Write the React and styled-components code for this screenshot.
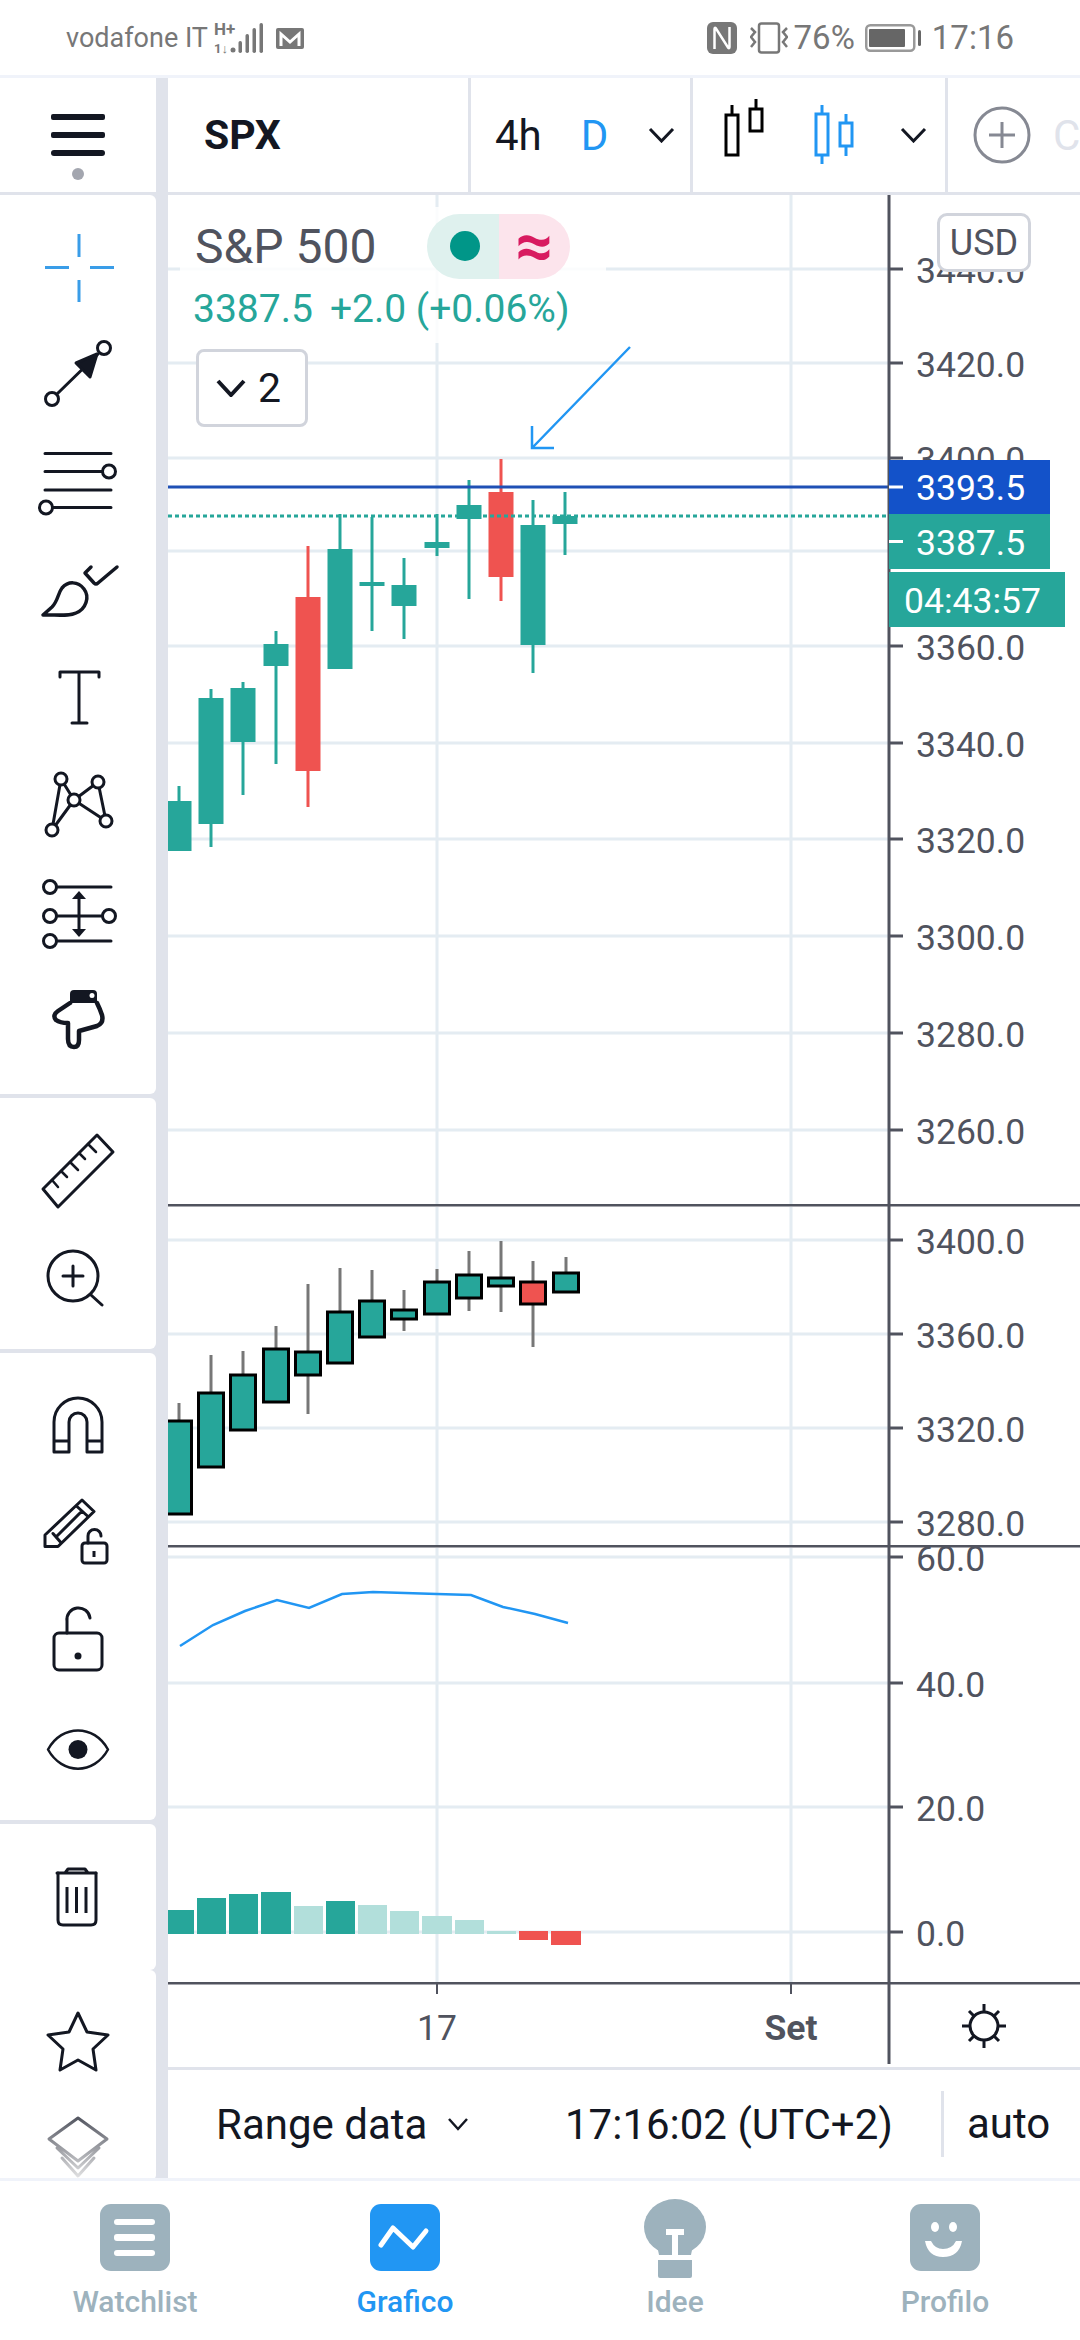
import React from 'react'
import styled, { createGlobalStyle } from 'styled-components'

const GlobalStyle = createGlobalStyle`
  html, body { margin: 0; padding: 0; background: #fff; }
  body { font-family: Roboto, "Liberation Sans", sans-serif; }
`

const UP = '#26a69a'
const DOWN = '#ef5350'
const GRID = '#e4ecf2'
const AXIS = '#50535e'
const INK = '#131722'
const BLUE = '#2196f3'
const STATUS = '#777'

// ---------- data (pixel coordinates on the chart canvas)
const gridX = [437, 791]

const mainTicks = [
  { y: 269, label: '3440.0' }, { y: 363, label: '3420.0' }, { y: 458, label: '3400.0' },
  { y: 551, label: '3380.0', hidden: true }, { y: 646, label: '3360.0' }, { y: 743, label: '3340.0' },
  { y: 839, label: '3320.0' }, { y: 936, label: '3300.0' }, { y: 1033, label: '3280.0' }, { y: 1130, label: '3260.0' },
]

const mainCandles = [
  { x: 179, w: 786, l: 848, t: 801, b: 851 },
  { x: 211, w: 689, l: 847, t: 698, b: 824 },
  { x: 243, w: 682, l: 795, t: 688, b: 742 },
  { x: 276, w: 631, l: 764, t: 644, b: 666 },
  { x: 308, w: 546, l: 807, t: 597, b: 771, red: true },
  { x: 340, w: 514, l: 669, t: 549, b: 669 },
  { x: 372, w: 517, l: 631, t: 582, b: 586 },
  { x: 404, w: 558, l: 639, t: 585, b: 606 },
  { x: 437, w: 514, l: 556, t: 542, b: 548 },
  { x: 469, w: 480, l: 599, t: 505, b: 519 },
  { x: 501, w: 459, l: 601, t: 492, b: 577, red: true },
  { x: 533, w: 500, l: 673, t: 525, b: 645 },
  { x: 565, w: 492, l: 555, t: 516, b: 524 },
]

const secondTicks = [
  { y: 1240, label: '3400.0' }, { y: 1334, label: '3360.0' }, { y: 1428, label: '3320.0' }, { y: 1522, label: '3280.0' },
]

const secondCandles = [
  { x: 179, w: 1403, l: 1515, t: 1421, b: 1514 },
  { x: 211, w: 1355, l: 1468, t: 1393, b: 1467 },
  { x: 243, w: 1351, l: 1431, t: 1375, b: 1430 },
  { x: 276, w: 1326, l: 1403, t: 1349, b: 1402 },
  { x: 308, w: 1284, l: 1414, t: 1352, b: 1375 },
  { x: 340, w: 1268, l: 1364, t: 1312, b: 1363 },
  { x: 372, w: 1270, l: 1338, t: 1301, b: 1337 },
  { x: 404, w: 1290, l: 1331, t: 1310, b: 1319 },
  { x: 437, w: 1269, l: 1315, t: 1282, b: 1314 },
  { x: 469, w: 1251, l: 1311, t: 1275, b: 1298 },
  { x: 501, w: 1241, l: 1312, t: 1278, b: 1286 },
  { x: 533, w: 1261, l: 1347, t: 1282, b: 1304, red: true },
  { x: 566, w: 1257, l: 1293, t: 1273, b: 1292 },
]

const thirdTicks = [
  { y: 1557, label: '60.0' }, { y: 1683, label: '40.0' }, { y: 1807, label: '20.0' }, { y: 1932, label: '0.0' },
]

const rsiLine = '180,1646 213,1625 245,1611 277,1600 309,1608 342,1594 373,1592 405,1593 437,1594 471,1595 503,1607 535,1614 568,1623'

const histogram = [
  { x: 168, w: 26, t: 1910, b: 1934, c: UP },
  { x: 197, w: 29, t: 1898, b: 1934, c: UP },
  { x: 229, w: 29, t: 1894, b: 1934, c: UP },
  { x: 261, w: 30, t: 1892, b: 1934, c: UP },
  { x: 294, w: 29, t: 1906, b: 1934, c: '#b2dfdb' },
  { x: 326, w: 29, t: 1901, b: 1934, c: UP },
  { x: 358, w: 29, t: 1905, b: 1934, c: '#b2dfdb' },
  { x: 390, w: 29, t: 1911, b: 1934, c: '#b2dfdb' },
  { x: 422, w: 30, t: 1916, b: 1934, c: '#b2dfdb' },
  { x: 455, w: 29, t: 1920, b: 1934, c: '#b2dfdb' },
  { x: 487, w: 29, t: 1931, b: 1934, c: '#b2dfdb' },
  { x: 519, w: 29, t: 1931, b: 1940, c: DOWN },
  { x: 551, w: 30, t: 1931, b: 1945, c: DOWN },
]

// ---------- page frame
const Page = styled.div`
  width: 1080px;
  height: 2340px;
  background: #fff;
  display: flex;
  flex-direction: column;
  overflow: hidden;
  color: ${INK};
`

const StatusBar = styled.div`
  height: 75px;
  flex: none;
  display: flex;
  align-items: center;
  justify-content: space-between;
  padding: 0 66px;
  border-bottom: 3px solid #f0f3fa;
  color: ${STATUS};
`

const StatusGroup = styled.div`
  display: flex;
  align-items: center;
`

const StatusText = styled.span`
  font-size: ${p => p.$size || 33}px;
  line-height: 40px;
  margin-left: ${p => p.$ml || 0}px;
  white-space: nowrap;
`

const StatusIcon = styled.svg`
  display: block;
  flex: none;
  margin-left: ${p => p.$ml || 0}px;
`

const Workspace = styled.div`
  flex: 1;
  min-height: 0;
  display: flex;
`

const Sidebar = styled.div`
  width: 156px;
  flex: none;
  display: flex;
  flex-direction: column;
  background: #e0e3eb;
`

const MenuCell = styled.div`
  height: 114px;
  flex: none;
  margin-bottom: 3px;
  background: #fff;
  display: flex;
  align-items: center;
  justify-content: center;
`

const ToolGroup = styled.div`
  background: #fff;
  padding: 19px 0 0;
  height: ${p => p.$h}px;
  flex: none;
  margin-bottom: ${p => p.$gap ?? 4}px;
  border-radius: 0 6px 6px 0;
  overflow: hidden;
  box-sizing: border-box;
`

const ToolIcon = styled.svg`
  display: block;
  width: 156px;
  height: 107px;
  fill: none;
  stroke: ${p => p.$stroke || INK};
  stroke-width: 3;
  stroke-linecap: round;
  stroke-linejoin: round;
`

const Gutter = styled.div`
  width: 12px;
  flex: none;
  background: #e0e3eb;
`

const Content = styled.div`
  flex: 1;
  min-width: 0;
  display: flex;
  flex-direction: column;
`

const Toolbar = styled.div`
  height: 114px;
  flex: none;
  display: flex;
  border-bottom: 3px solid #e0e3eb;
`

const ToolCell = styled.div`
  width: ${p => p.$w}px;
  flex: none;
  box-sizing: border-box;
  display: flex;
  align-items: center;
  padding-left: ${p => p.$pad || 0}px;
  border-right: ${p => (p.$last ? 'none' : '3px solid #e0e3eb')};
  overflow: hidden;
`

const Spacer = styled.span`
  width: ${p => p.$w}px;
  flex: none;
`

const Symbol = styled.span`
  font-size: 41px;
  font-weight: 700;
  color: ${INK};
`

const Interval = styled.span`
  font-size: 42px;
  color: ${p => (p.$active ? BLUE : INK)};
  margin-right: ${p => p.$gap || 0}px;
`

const FadedLetter = styled.span`
  font-size: 42px;
  color: #e0e3eb;
  margin-left: 22px;
`

const ChartArea = styled.div`
  position: relative;
  height: 1872px;
  flex: none;
  display: flex;
  flex-direction: column;
`

const PaneSvg = styled.svg`
  display: block;
  width: 912px;
  height: ${p => p.$h}px;
  flex: none;
`

const AxisLabel = styled.text`
  font-family: Roboto, sans-serif;
  font-size: 35.5px;
  fill: ${p => p.$fill || AXIS};
  font-weight: ${p => (p.$bold ? 700 : 400)};
  dominant-baseline: central;
`

const Legend = styled.div`
  position: absolute;
  left: 12px;
  top: 12px;
  width: 426px;
  height: 136px;
  background: rgba(255, 255, 255, 0.85);
`

const LegendTitle = styled.div`
  display: flex;
  align-items: center;
  height: 66px;
  margin-top: 6px;
  padding-left: 15px;
`

const LegendName = styled.span`
  font-size: 48px;
  color: ${AXIS};
  width: 232px;
  flex: none;
  white-space: nowrap;
`

const Pill = styled.div`
  display: flex;
  width: 143px;
  height: 65px;
  border-radius: 33px;
  overflow: hidden;
`

const PillSide = styled.div`
  flex: 1;
  display: flex;
  align-items: center;
  justify-content: center;
  background: ${p => p.$bg};
  color: #d81b60;
  font-size: 66px;
  font-weight: 700;
  line-height: 1;
`

const Dot = styled.span`
  width: 30px;
  height: 30px;
  border-radius: 50%;
  background: #009688;
  margin-left: 4px;
`

const Quote = styled.div`
  display: flex;
  gap: 17px;
  padding-left: 13px;
  margin-top: 8px;
  font-size: 39px;
  line-height: 44px;
  color: ${UP};
  white-space: nowrap;
`

const CollapseButton = styled.div`
  position: absolute;
  left: 28px;
  top: 154px;
  width: 112px;
  height: 78px;
  box-sizing: border-box;
  background: #fff;
  border: 3px solid #d1d4dc;
  border-radius: 8px;
  display: flex;
  align-items: center;
  gap: 12px;
  padding-left: 17px;
  font-size: 41px;
  color: ${INK};
`

const CurrencyButton = styled.div`
  position: absolute;
  left: 769px;
  top: 18px;
  width: 94px;
  height: 59px;
  box-sizing: border-box;
  background: #fff;
  border: 3px solid #d1d4dc;
  border-radius: 10px;
  display: flex;
  align-items: center;
  justify-content: center;
  font-size: 36px;
  color: ${AXIS};
`

const BottomBar = styled.div`
  flex: 1;
  min-height: 0;
  display: flex;
  align-items: center;
  border-top: 3px solid #e0e3eb;
  font-size: 42px;
  color: ${INK};
`

const RangeButton = styled.div`
  display: flex;
  align-items: center;
  gap: 20px;
  margin-left: 48px;
  width: 349px;
  flex: none;
  white-space: nowrap;
`

const Clock = styled.span`
  width: 376px;
  flex: none;
  white-space: nowrap;
`

const ScaleMode = styled.span`
  height: 66px;
  line-height: 66px;
  padding-left: 23px;
  border-left: 3px solid #e0e3eb;
`

const NavBar = styled.nav`
  height: 159px;
  flex: none;
  display: grid;
  grid-template-columns: repeat(4, 270px);
  border-top: 3px solid #f0f3fa;
`

const NavItem = styled.div`
  display: flex;
  flex-direction: column;
  align-items: center;
  padding-top: 16px;
  font-size: 30px;
  font-weight: 500;
  color: ${p => (p.$active ? BLUE : '#9db2bd')};
`

const NavIcon = styled.svg`
  display: block;
  width: 80px;
  height: 84px;
`

const NavLabel = styled.span`
  line-height: 32px;
  margin-top: 5px;
`

// ---------- drawings
const Chevron = ({ w = 23, h = 12, sw = 3, color = INK }) => (
  <svg width={w + 4} height={h + 4} viewBox={`-2 -2 ${w + 4} ${h + 4}`} fill="none" style={{ flex: 'none' }}>
    <path d={`M0 0 L${w / 2} ${h} L${w} 0`} stroke={color} strokeWidth={sw} />
  </svg>
)

const Candle = ({ c, border }) => {
  const color = c.red ? DOWN : UP
  return (
    <g>
      <line x1={c.x} x2={c.x} y1={c.w} y2={c.l} stroke={border ? '#777' : color} strokeWidth="3" />
      <rect x={c.x - 12.5} y={c.t} width="25" height={c.b - c.t} fill={color}
        stroke={border ? '#000' : 'none'} strokeWidth={border ? 3 : 0} />
    </g>
  )
}

const Grid = ({ top, bottom, ticks }) => (
  <g>
    {gridX.map(x => <line key={x} x1={x} x2={x} y1={top} y2={bottom} stroke={GRID} strokeWidth="3" />)}
    {ticks.map(t => <line key={t.y} x1="168" x2="889" y1={t.y} y2={t.y} stroke={GRID} strokeWidth="3" />)}
  </g>
)

const Axis = ({ top, bottom, ticks }) => (
  <g>
    <line x1="889" x2="889" y1={top} y2={bottom} stroke={AXIS} strokeWidth="3" />
    {ticks.map(t => (
      <g key={t.y}>
        <line x1="889" x2="903" y1={t.y} y2={t.y} stroke={AXIS} strokeWidth="3" />
        {!t.hidden && <AxisLabel x="916" y={t.y + 2}>{t.label}</AxisLabel>}
      </g>
    ))}
  </g>
)

const PriceBox = ({ y, h, x = 889, w, bg, tick, label, tx = 916 }) => (
  <g>
    <rect x={x} y={y} width={w} height={h} fill={bg} />
    {tick && <line x1="889" x2="903" y1={y + h / 2} y2={y + h / 2} stroke="#fff" strokeWidth="3" />}
    <AxisLabel x={tx} y={y + h / 2 + 1} $fill="#fff">{label}</AxisLabel>
  </g>
)

const MainPane = () => (
  <PaneSvg $h={1009} viewBox="168 195 912 1009">
    <Grid top={195} bottom={1204} ticks={mainTicks} />
    {mainCandles.map(c => <Candle key={c.x} c={c} />)}
    <line x1="168" x2="889" y1="487" y2="487" stroke="#1f50b5" strokeWidth="3" />
    <line x1="168" x2="889" y1="516" y2="516" stroke={UP} strokeWidth="3" strokeDasharray="4 3" />
    <path d="M630 347 L533 447 M532 426 L532 448 L554 448" fill="none" stroke={BLUE} strokeWidth="2.5" />
    <Axis top={195} bottom={1204} ticks={mainTicks} />
    <PriceBox y={460} h={54} w={161} bg="#1352c9" tick label="3393.5" />
    <PriceBox y={514} h={55} w={161} bg={UP} tick label="3387.5" />
    <PriceBox y={572} h={55} w={176} bg={UP} label="04:43:57" tx={904} />
  </PaneSvg>
)

const SecondPane = () => (
  <PaneSvg $h={341} viewBox="168 1204 912 341">
    <line x1="168" x2="1080" y1="1205" y2="1205" stroke={AXIS} strokeWidth="3" />
    <Grid top={1207} bottom={1545} ticks={secondTicks} />
    <clipPath id="secondClip"><rect x="168" y="1204" width="721" height="341" /></clipPath>
    <g clipPath="url(#secondClip)">
      {secondCandles.map(c => <Candle key={c.x} c={c} border />)}
    </g>
    <Axis top={1204} bottom={1545} ticks={secondTicks} />
  </PaneSvg>
)

const ThirdPane = () => (
  <PaneSvg $h={437} viewBox="168 1545 912 437">
    <line x1="168" x2="1080" y1="1546" y2="1546" stroke={AXIS} strokeWidth="3" />
    <Grid top={1548} bottom={1982} ticks={thirdTicks} />
    <polyline points={rsiLine} fill="none" stroke={BLUE} strokeWidth="2.5" />
    {histogram.map(b => <rect key={b.x} x={b.x} y={b.t} width={b.w} height={b.b - b.t} fill={b.c} />)}
    <Axis top={1545} bottom={1982} ticks={thirdTicks} />
  </PaneSvg>
)

const TimeAxis = () => (
  <PaneSvg $h={82} viewBox="168 1982 912 82">
    <line x1="168" x2="1080" y1="1983" y2="1983" stroke={AXIS} strokeWidth="3" />
    {gridX.map(x => <line key={x} x1={x} x2={x} y1="1983" y2="1994" stroke={AXIS} strokeWidth="2" />)}
    <line x1="889" x2="889" y1="1982" y2="2064" stroke={AXIS} strokeWidth="3" />
    <AxisLabel x="437" y="2028" textAnchor="middle">17</AxisLabel>
    <AxisLabel x="791" y="2028" textAnchor="middle" $bold>Set</AxisLabel>
    <g fill="none" stroke={INK} strokeWidth="3">
      <circle cx="984" cy="2026" r="14" />
      <path d="M984 2004 V2012 M984 2040 V2048 M962 2026 H970 M998 2026 H1006 M969 2011 L974 2016 M994 2036 L999 2041 M969 2041 L974 2036 M994 2016 L999 2011" />
    </g>
  </PaneSvg>
)

const Tool = ({ children, stroke }) => (
  <ToolIcon viewBox="0 0 156 107" $stroke={stroke}>{children}</ToolIcon>
)

const Ring = ({ x, y, r = 6.5 }) => <circle cx={x} cy={y} r={r} fill="#fff" />

const tools = {
  cross: (
    <Tool stroke="#3a9de8">
      <path d="M45 53.5 H69 M90 53.5 H114 M79 20 V43 M79 66 V88" strokeLinecap="butt" />
    </Tool>
  ),
  trend: (
    <Tool>
      <path d="M57 73 L98 33" />
      <polygon points="76,42 97,33 90,56" fill={INK} />
      <Ring x={52} y={78} /><Ring x={104} y={27} />
    </Tool>
  ),
  lines: (
    <Tool>
      <path d="M45 25.5 H111 M45 43.5 H103 M45 62 H111 M53 79.5 H111" />
      <Ring x={109} y={43.5} /><Ring x={46} y={79.5} />
    </Tool>
  ),
  brush: (
    <Tool>
      <path d="M43 80 L52 72 C58 66 58 58 62 53 C68 46 78 46 84 54 C90 62 86 74 76 78 C70 81 62 80 43 80 Z" strokeWidth="3.5" />
      <path d="M91 32 L85 38 L94 48 Q96 50 98 48 L117 32" strokeWidth="3.5" />
    </Tool>
  ),
  text: (
    <Tool>
      <path d="M60 35 V30 H99 V35 M79 30 V81 M72 81 H87" />
    </Tool>
  ),
  pattern: (
    <Tool>
      <path d="M52 81 L61 30 L74 51 L52 81 M74 51 L98 33 L106 72 L74 51" />
      <Ring x={61} y={30} r={6} /><Ring x={98} y={33} r={6} /><Ring x={74} y={51} r={6} />
      <Ring x={106} y={72} r={6} /><Ring x={52} y={81} r={6} />
    </Tool>
  ),
  fib: (
    <Tool>
      <path d="M56 31 H111 M56 60 H103 M56 85 H111 M79 38 V78" />
      <polygon points="79,35 72,43 86,43" fill={INK} stroke="none" />
      <polygon points="79,81 72,73 86,73" fill={INK} stroke="none" />
      <Ring x={50} y={31} /><Ring x={50} y={60} /><Ring x={109} y={60} /><Ring x={50} y={85} />
    </Tool>
  ),
  hand: (
    <Tool>
      <path d="M70 40 L58 48 Q52 52 56 57 Q60 60 68 60 L68 76 Q68 84 74 84 Q79 84 79 77 L79 68 L97 63 Q104 60 102 52 Q100 46 97 40" strokeWidth="4.5" />
      <path d="M70 40 V31 Q70 27 74 27 H93 Q97 27 97 31 V40 Z" fill={INK} stroke="none" />
      <circle cx="92" cy="32.5" r="2.5" fill="#fff" stroke="none" />
    </Tool>
  ),
  ruler: (
    <Tool>
      <path d="M43 72 L97 18 L113 35 L58 90 Z" />
      <path d="M52 63 L58 70 M61 54 L67 60 M70 45 L78 53 M79 36 L85 42 M88 27 L96 35" strokeWidth="2.5" />
    </Tool>
  ),
  zoom: (
    <Tool>
      <circle cx="73" cy="52" r="25" />
      <path d="M63 52 H83 M73 42 V62 M91 71 L102 81" />
    </Tool>
  ),
  magnet: (
    <Tool>
      <path d="M54 80 V50 A24 24 0 0 1 102 50 V80 H87 V50 A9 9 0 0 0 69 50 V80 Z M54 69 H69 M87 69 H102" />
    </Tool>
  ),
  drawLock: (
    <Tool>
      <path d="M45 56 L82 21 L94 32.5 L58 67.5 L45 67.5 Z M53 54.5 L60 62.5 M77 27.5 L88 37.5 M57 57 L82 32" />
      <rect x="82" y="64" width="25" height="20" rx="3" />
      <path d="M88 64 V57 A6.5 6.5 0 0 1 101 57" />
      <rect x="92.5" y="72" width="3" height="6" fill={INK} stroke="none" />
    </Tool>
  ),
  lock: (
    <Tool>
      <rect x="54" y="47" width="48" height="37" rx="5" />
      <path d="M67 47 V35 A11.5 11.5 0 0 1 90 32" />
      <circle cx="78" cy="70" r="3.5" fill={INK} stroke="none" />
    </Tool>
  ),
  eye: (
    <Tool>
      <path d="M48 56.5 C62 31 94 31 108 56.5 C94 82 62 82 48 56.5 Z" strokeWidth="2.5" />
      <circle cx="78" cy="56.5" r="9.5" fill={INK} stroke="none" />
    </Tool>
  ),
  trash: (
    <Tool>
      <path d="M57 30 H96 M65 30 L68 26 H85 L88 30" />
      <path d="M58 30 V77 Q58 82 63 82 H91 Q96 82 96 77 V30" />
      <path d="M67 44 V70 M76.5 44 V70 M86 44 V70" strokeLinecap="butt" />
    </Tool>
  ),
  star: (
    <Tool>
      <polygon points="78,24 87,43 108,46 93,60 96,81 78,71 60,81 63,60 48,46 69,43" />
    </Tool>
  ),
  layers: (
    <Tool stroke="url(#layerFade)">
      <defs>
        <linearGradient id="layerFade" gradientUnits="userSpaceOnUse" x1="0" y1="20" x2="0" y2="88">
          <stop offset="0" stopColor="#50535e" />
          <stop offset="1" stopColor="#f0f0f0" />
        </linearGradient>
      </defs>
      <path d="M78 22 L107 43 L78 65 L49 43 Z M57 52 L78 72 L99 52 M62 62 L78 80 L94 62" />
    </Tool>
  ),
}

const SignalMailIcon = () => (
  <StatusIcon $ml={6} width="92" height="34" viewBox="0 0 92 34">
    <text x="0" y="14" fontFamily="Roboto" fontSize="17" fontWeight="700" fill={STATUS}>H+</text>
    <text x="0" y="32" fontFamily="Roboto" fontSize="13" fontWeight="700" fill={STATUS}>1↓</text>
    <g fill={STATUS}>
      <circle cx="19" cy="29" r="2.5" />
      <rect x="24.5" y="20" width="3.5" height="12" rx="1.7" />
      <rect x="31.5" y="13" width="3.5" height="19" rx="1.7" />
      <rect x="38.5" y="7" width="3.5" height="25" rx="1.7" />
      <rect x="45.5" y="2" width="3.5" height="30" rx="1.7" />
      <rect x="62" y="7" width="28" height="21" rx="2" />
    </g>
    <path d="M67 25 V13 L76 21 L85 13 V25" stroke="#fff" strokeWidth="3" fill="none" />
  </StatusIcon>
)

const NfcIcon = () => (
  <StatusIcon width="30" height="32" viewBox="0 0 30 32">
    <rect width="30" height="32" rx="6" fill={STATUS} />
    <path d="M7.5 27 V7 Q7.5 5 9 6.5 L21 25.5 Q22.5 27 22.5 25 V5" fill="none" stroke="#fff" strokeWidth="2.5" />
  </StatusIcon>
)

const VibrateIcon = () => (
  <StatusIcon $ml={13} width="38" height="32" viewBox="0 0 38 32" fill="none" stroke={STATUS} strokeWidth="2.5">
    <rect x="9" y="1.5" width="20" height="29" rx="2.5" />
    <path d="M1 6 L5 10 L1 15 L5 20 L1 25 M37 6 L33 10 L37 15 L33 20 L37 25" />
  </StatusIcon>
)

const BatteryIcon = () => (
  <StatusIcon $ml={10} width="56" height="28" viewBox="0 0 56 28">
    <rect x="1.25" y="1.25" width="48" height="25.5" rx="4" fill="none" stroke="#999" strokeWidth="2.5" />
    <rect x="4" y="5" width="36" height="18" rx="1" fill="#666" />
    <rect x="53" y="6" width="3" height="16" rx="1.5" fill="#666" />
  </StatusIcon>
)

const MenuIcon = () => (
  <svg width="60" height="90" viewBox="0 0 60 90">
    <g fill={INK}>
      <rect x="3" y="24" width="54" height="6" rx="2" />
      <rect x="3" y="42" width="54" height="6" rx="2" />
      <rect x="3" y="60" width="54" height="6" rx="3" />
    </g>
    <ellipse cx="30" cy="84" rx="6" ry="6" fill="#a3a6af" />
  </svg>
)

const CandleIcon = ({ color, left, right }) => (
  <svg width="44" height="80" viewBox="0 0 44 80" fill="none" stroke={color} strokeWidth="3" style={{ flex: 'none' }}>
    {[left, right].map(c => (
      <g key={c.x}>
        <line x1={c.x} x2={c.x} y1={c.w} y2={c.l} />
        <rect x={c.x - 6} y={c.t} width="12" height={c.b - c.t} fill="#fff" />
      </g>
    ))}
  </svg>
)

const PlusIcon = () => (
  <svg width="58" height="58" viewBox="0 0 58 58" fill="none" stroke="#868993" strokeWidth="3" style={{ flex: 'none' }}>
    <circle cx="29" cy="29" r="27" />
    <path d="M29 16 V42 M16 29 H42" />
  </svg>
)

const WatchlistIcon = () => (
  <NavIcon viewBox="0 0 80 84">
    <rect x="5" y="7" width="70" height="67" rx="11" fill="currentColor" />
    <g fill="#fff">
      <rect x="19" y="22" width="41" height="6" rx="3" />
      <rect x="19" y="37" width="41" height="7" rx="3" />
      <rect x="19" y="53" width="41" height="6" rx="3" />
    </g>
  </NavIcon>
)

const ChartIcon = () => (
  <NavIcon viewBox="0 0 80 84">
    <rect x="5" y="7" width="70" height="67" rx="11" fill="currentColor" />
    <path d="M16 48 L28 31 L48 50 L61 34" fill="none" stroke="#fff" strokeWidth="5" strokeLinecap="round" strokeLinejoin="round" />
  </NavIcon>
)

const IdeaIcon = () => (
  <NavIcon viewBox="0 0 80 84">
    <ellipse cx="40" cy="30" rx="31" ry="28" fill="currentColor" />
    <path d="M22 48 H58 L56 58 H24 Z" fill="currentColor" />
    <path d="M23 63 H57 V79 Q57 81 55 81 H25 Q23 81 23 79 Z" fill="currentColor" />
    <path d="M31 32 H49 V38 H43 V58 H37 V38 H31 Z" fill="#fff" />
  </NavIcon>
)

const ProfileIcon = () => (
  <NavIcon viewBox="0 0 80 84">
    <rect x="5" y="7" width="70" height="67" rx="11" fill="currentColor" />
    <g fill="#fff">
      <ellipse cx="30" cy="30" rx="4" ry="5" />
      <ellipse cx="48" cy="30" rx="4" ry="5" />
      <path d="M20 44 L26 44 Q30 52 38 52 Q47 52 51 44 L57 44 Q54 60 38 60 Q23 60 20 44 Z" />
    </g>
  </NavIcon>
)

const App = () => (
  <Page>
    <GlobalStyle />
    <StatusBar>
      <StatusGroup>
        <StatusText $size={27}>vodafone IT</StatusText>
        <SignalMailIcon />
      </StatusGroup>
      <StatusGroup>
        <NfcIcon />
        <VibrateIcon />
        <StatusText $ml={6}>76%</StatusText>
        <BatteryIcon />
        <StatusText $ml={11}>17:16</StatusText>
      </StatusGroup>
    </StatusBar>
    <Workspace>
      <Sidebar>
        <MenuCell><MenuIcon /></MenuCell>
        <ToolGroup $h={899}>
          {tools.cross}{tools.trend}{tools.lines}{tools.brush}
          {tools.text}{tools.pattern}{tools.fib}{tools.hand}
        </ToolGroup>
        <ToolGroup $h={251}>{tools.ruler}{tools.zoom}</ToolGroup>
        <ToolGroup $h={467}>{tools.magnet}{tools.drawLock}{tools.lock}{tools.eye}</ToolGroup>
        <ToolGroup $h={146} $gap={0}>{tools.trash}</ToolGroup>
        <ToolGroup $h={211} $gap={0}>{tools.star}{tools.layers}</ToolGroup>
      </Sidebar>
      <Gutter />
      <Content>
        <Toolbar>
          <ToolCell $w={303} $pad={36}><Symbol>SPX</Symbol></ToolCell>
          <ToolCell $w={222} $pad={24}>
            <Interval $gap={39}>4h</Interval>
            <Interval $active $gap={40}>D</Interval>
            <Chevron />
          </ToolCell>
          <ToolCell $w={255} $pad={27}>
            <CandleIcon color="#000" left={{ x: 12, w: 10, l: 60, t: 20, b: 60 }} right={{ x: 36, w: 4, l: 36, t: 14, b: 36 }} />
            <Spacer $w={46} />
            <CandleIcon color={BLUE} left={{ x: 12, w: 10, l: 69, t: 19, b: 60 }} right={{ x: 36, w: 19, l: 61, t: 28, b: 51 }} />
            <Spacer $w={46} />
            <Chevron />
          </ToolCell>
          <ToolCell $w={132} $pad={25} $last>
            <PlusIcon />
            <FadedLetter>C</FadedLetter>
          </ToolCell>
        </Toolbar>
        <ChartArea>
          <MainPane />
          <SecondPane />
          <ThirdPane />
          <TimeAxis />
          <Legend>
            <LegendTitle>
              <LegendName>S&amp;P 500</LegendName>
              <Pill>
                <PillSide $bg="#dff1ee"><Dot /></PillSide>
                <PillSide $bg="#fce4ec">≈</PillSide>
              </Pill>
            </LegendTitle>
            <Quote><span>3387.5</span><span>+2.0 (+0.06%)</span></Quote>
          </Legend>
          <CollapseButton><Chevron w={26} h={14} sw={4} />2</CollapseButton>
          <CurrencyButton>USD</CurrencyButton>
        </ChartArea>
        <BottomBar>
          <RangeButton>Range data <Chevron w={18} h={10} sw={2.5} /></RangeButton>
          <Clock>17:16:02 (UTC+2)</Clock>
          <ScaleMode>auto</ScaleMode>
        </BottomBar>
      </Content>
    </Workspace>
    <NavBar>
      <NavItem><WatchlistIcon /><NavLabel>Watchlist</NavLabel></NavItem>
      <NavItem $active><ChartIcon /><NavLabel>Grafico</NavLabel></NavItem>
      <NavItem><IdeaIcon /><NavLabel>Idee</NavLabel></NavItem>
      <NavItem><ProfileIcon /><NavLabel>Profilo</NavLabel></NavItem>
    </NavBar>
  </Page>
)

export default App
